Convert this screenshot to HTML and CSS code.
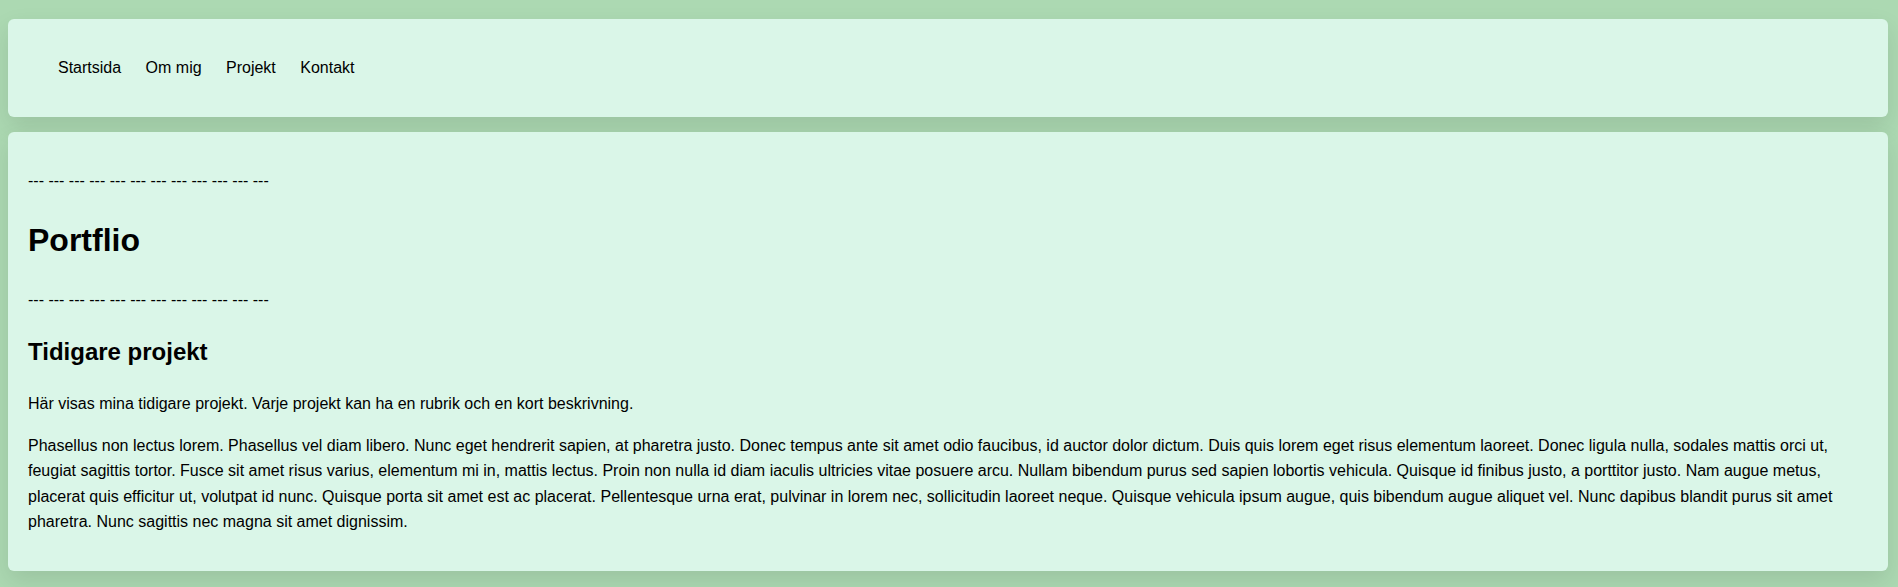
FILE: index.html
```html
<!DOCTYPE html>
<html lang="sv">
<head>
<meta charset="utf-8">
<title>Portflio</title>
<link rel="stylesheet" href="styles.css">
</head>
<body>
<header class="site-header">
  <nav>
    <ul class="nav-list">
      <li><a href="#">Startsida</a></li>
      <li><a href="#">Om mig</a></li>
      <li><a href="#">Projekt</a></li>
      <li><a href="#">Kontakt</a></li>
    </ul>
  </nav>
</header>
<main class="content">
  <p>--- --- --- --- --- --- --- --- --- --- --- ---</p>
  <h1>Portflio</h1>
  <p>--- --- --- --- --- --- --- --- --- --- --- ---</p>
  <h2>Tidigare projekt</h2>
  <p>Här visas mina tidigare projekt. Varje projekt kan ha en rubrik och en kort beskrivning.</p>
  <p>Phasellus non lectus lorem. Phasellus vel diam libero. Nunc eget hendrerit sapien, at pharetra justo. Donec tempus ante sit amet odio faucibus, id auctor dolor dictum. Duis quis lorem eget risus elementum laoreet. Donec ligula nulla, sodales mattis orci ut, feugiat sagittis tortor. Fusce sit amet risus varius, elementum mi in, mattis lectus. Proin non nulla id diam iaculis ultricies vitae posuere arcu. Nullam bibendum purus sed sapien lobortis vehicula. Quisque id finibus justo, a porttitor justo. Nam augue metus, placerat quis efficitur ut, volutpat id nunc. Quisque porta sit amet est ac placerat. Pellentesque urna erat, pulvinar in lorem nec, sollicitudin laoreet neque. Quisque vehicula ipsum augue, quis bibendum augue aliquet vel. Nunc dapibus blandit purus sit amet pharetra. Nunc sagittis nec magna sit amet dignissim.</p>
</main>
</body>
</html>
```

FILE: styles.css
```css
html {
  background: #acd9b2;
}

body {
  margin: 0;
  padding: 19px 10px 17px 8px;
  font-family: "Liberation Sans", Arial, sans-serif;
  font-size: 16px;
  line-height: 1.6;
  color: #000;
  background: #acd9b2;
}

.site-header,
.content {
  background: #daf6e8;
  border-radius: 6px;
  padding: 20px;
  box-shadow: 0 10px 24px rgba(0, 0, 0, 0.1);
}

.site-header {
  padding: 20px 20px 20px 10px;
}

.nav-list {
  list-style: none;
  margin: 16px 0;
  padding: 0 0 0 40px;
  display: flex;
  gap: 24.45px;
}

.nav-list a {
  color: #000;
  text-decoration: none;
}

.content {
  margin-top: 15px;
}

.content h1 {
  font-size: 32px;
  margin: 21.44px 0;
}

.content h2 {
  font-size: 24px;
  margin: 19.92px 0;
}

.content p {
  margin: 16px 0;
}
```
